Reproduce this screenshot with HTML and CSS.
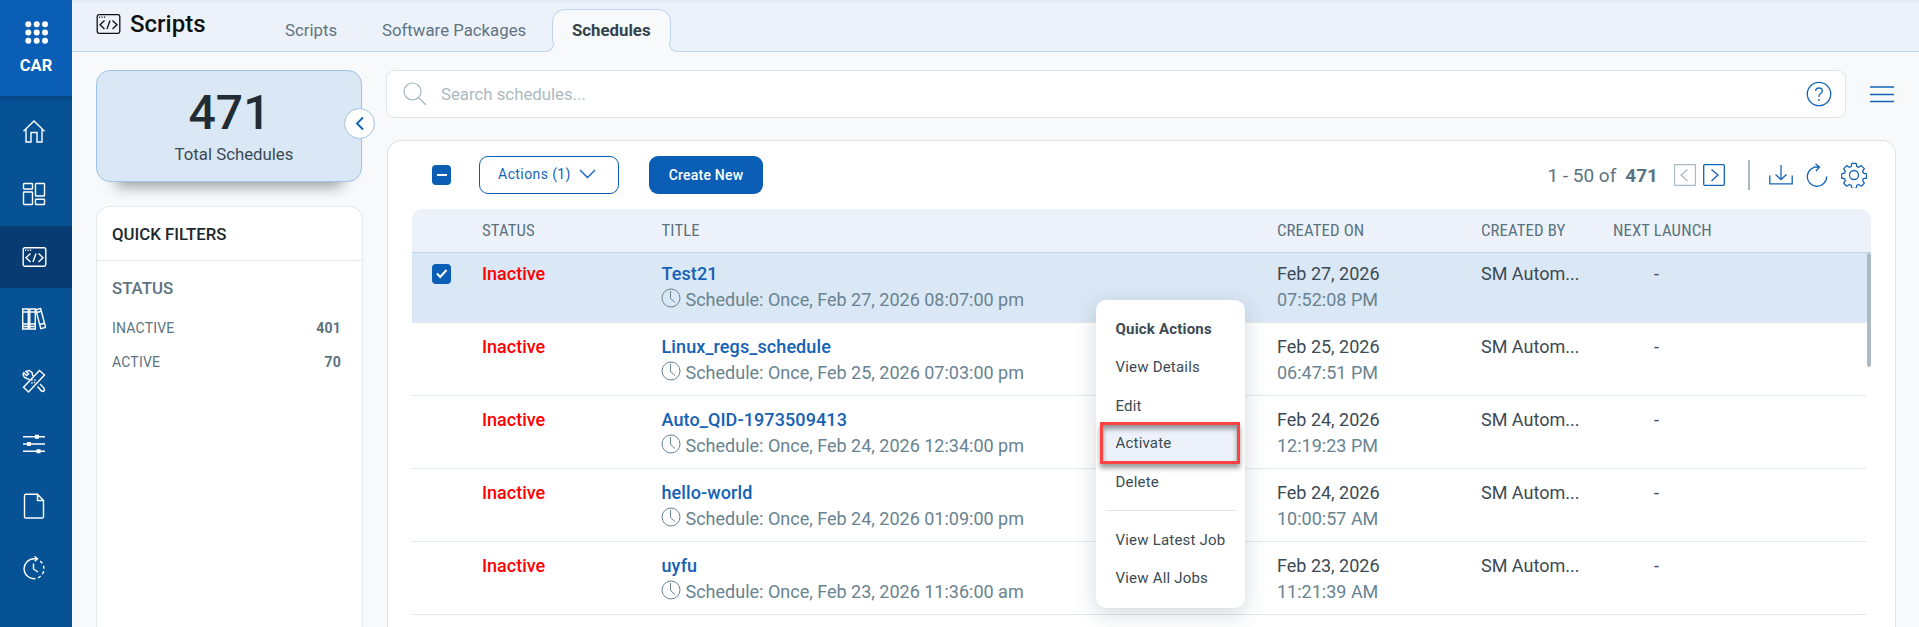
FILE: index.html
```html
<!DOCTYPE html>
<html lang="en">
<head>
    <meta charset="UTF-8">
    <meta name="viewport" content="width=device-width, initial-scale=1.0">
    <title>Scripts - Schedules</title>
    <link rel="stylesheet" href="styles.css">
</head>
<body>
    <!-- Shared icons -->
    <svg class="icon-defs" width="0" height="0">
        <symbol id="icon-clock" viewBox="0 0 20 20">
            <circle cx="10" cy="10" r="9"/>
            <path d="M9.5 3v7.5l4.5 4"/>
        </symbol>
        <symbol id="icon-script" viewBox="0 0 24 20">
            <rect x=".7" y=".7" width="22.6" height="18.6" rx="1.8"/>
            <path d="M8 6.5L3.5 10.7 8 15M16 6.5l4.5 4.2L16 15M13.5 6.5l-3 8.5"/>
            <path d="M2.5 3.2h1.2M5 3.2h1.2M7.5 3.2h1.2"/>
        </symbol>
    </svg>

    <nav class="sidebar">
        <div class="app-switch">
            <svg width="24" height="24" viewBox="0 0 24 24">
                <circle cx="3.3" cy="3.3" r="3"/><circle cx="11.7" cy="3.3" r="3"/><circle cx="20" cy="3.3" r="3"/>
                <circle cx="3.3" cy="11.5" r="3"/><circle cx="11.7" cy="11.5" r="3"/><circle cx="20" cy="11.5" r="3"/>
                <circle cx="3.3" cy="19.7" r="3"/><circle cx="11.7" cy="19.7" r="3"/><circle cx="20" cy="19.7" r="3"/>
            </svg>
            <span>CAR</span>
        </div>
        <div class="nav-item">
            <svg width="24" height="24" viewBox="0 0 24 24"><path d="M1.5 11.3L12 1l10.500 10.300M4 9.500V22h5v-9.500h6V22h5V9.500"/></svg>
        </div>
        <div class="nav-item">
            <svg width="24" height="24" viewBox="0 0 24 24"><rect x="1.500" y="1.500" width="9" height="5.500" rx=".6"/><rect x="1.500" y="10" width="9" height="12.500" rx=".6"/><rect x="13.500" y="1.500" width="9" height="12.500" rx=".6"/><rect x="13.500" y="17.200" width="9" height="5.300" rx=".6"/></svg>
        </div>
        <div class="nav-item active">
            <svg width="25" height="20"><use href="#icon-script"/></svg>
        </div>
        <div class="nav-item">
            <svg width="24" height="24" viewBox="0 0 24 24"><path d="M.7 2h5.600v20H.7zM.7 5h5.600M.7 17h5.600M.7 19.500h5.600M7.800 2h5.500v20H7.800zM7.800 5h5.500M7.800 17h5.500M7.800 19.500h5.500M13.800 2.800l4.800-1.300 5 18.800-4.800 1.400zM14.600 5.500l4.800-1.300M17.800 17.500l4.900-1.300"/></svg>
        </div>
        <div class="nav-item">
            <svg width="24" height="24" viewBox="0 0 24 24"><path d="M17.500 1.500l5 4.500L6.500 23l-5-4.700zM7.500 10.700L2.500 8.500 1 5.500l.8-1.700L4.500 6.500 6.500 5 4 2.300 7 1.500l3 2 .8 3.500M15.500 17.500l4 4.500 2 .5 1-1.700-.5-1.800-4-4M9.500 10.500l1 1M12 13l1 1M12.500 10.500l1 1M9.500 13.500l1 1"/></svg>
        </div>
        <div class="nav-item">
            <svg width="24" height="24" viewBox="0 0 24 24"><path d="M1 4.700h22M1 12h22M1 19.300h22"/><path class="knobs" d="M13 2.700h4v4h-4zM5 10h4v4H5zM14.500 17.300h4v4h-4z"/></svg>
        </div>
        <div class="nav-item">
            <svg width="24" height="26" viewBox="0 0 24 26"><path d="M15.500 1.200H4Q2.500 1.200 2.500 2.700v21Q2.500 25 4 25h16q1.500 0 1.500-1.300V7.500zv6.300h6"/></svg>
        </div>
        <div class="nav-item">
            <svg width="24" height="24" viewBox="0 0 24 24"><path d="M14.500 2.700H12A10 10 0 1 0 13.500 22.600M11.500 7.500v5.500l4.500 3M12.500.3l3 2.400-2.700 2.600"/><path d="M16 21.900a10 10 0 0 0 2.700-1.800M20.300 18.200a10 10 0 0 0 1.400-3M22 12.800a10 10 0 0 0-.5-3M20.300 7.400a10 10 0 0 0-2.100-2.300"/></svg>
        </div>
    </nav>

    <div class="page">
        <header class="topbar">
            <h1><svg width="25" height="20"><use href="#icon-script"/></svg><span>Scripts</span></h1>
            <div class="tabs">
                <a class="tab tab-scripts">Scripts</a>
                <a class="tab tab-packages">Software Packages</a>
                <a class="tab selected">Schedules</a>
            </div>
        </header>

        <div class="content">
            <aside class="filters">
                <div class="total-card">
                    <div class="total-number">471</div>
                    <div class="total-label">Total Schedules</div>
                    <button class="collapse"><svg width="10" height="15" viewBox="0 0 10 15"><path d="M8 1.500L2 7.500l6 6"/></svg></button>
                </div>
                <div class="filter-card">
                    <h2>QUICK FILTERS</h2>
                    <h3>STATUS</h3>
                    <div class="filter-row"><span>INACTIVE</span><b>401</b></div>
                    <div class="filter-row"><span>ACTIVE</span><b>70</b></div>
                </div>
            </aside>

            <main class="main">
                <div class="search-row">
                    <div class="search">
                        <svg class="search-icon" width="24" height="24" viewBox="0 0 24 24"><circle cx="9.500" cy="9.500" r="8.500"/><path d="M15.500 15.500l7.500 7.500"/></svg>
                        <span class="placeholder">Search schedules...</span>
                        <svg class="help-icon" width="26" height="26" viewBox="0 0 26 26"><circle cx="13" cy="13" r="11.700"/><path d="M9.700 10Q9.700 7 13 7t3.300 3q0 1.400-1.700 2.500T13 15.300v.7"/><path class="dot" d="M13 18v2"/></svg>
                    </div>
                    <svg class="menu-icon" width="24" height="17" viewBox="0 0 24 17"><path d="M0 1h24M0 8.500h24M0 15.500h24"/></svg>
                </div>

                <section class="panel">
                    <div class="toolbar">
                        <span class="check"><svg width="19" height="20" viewBox="0 0 19 20"><path d="M5 10h10"/></svg></span>
                        <button class="btn btn-outline">Actions (1)<svg width="17" height="10" viewBox="0 0 17 10"><path d="M1 1l7.500 7.500L16 1"/></svg></button>
                        <button class="btn btn-primary">Create New</button>
                        <div class="pager">
                            <span class="range">1 - 50 of</span>
                            <b>471</b>
                            <svg class="page-btn off" width="22" height="22" viewBox="0 0 22 22"><rect x=".5" y=".5" width="21" height="21" rx="1"/><path d="M13.500 5.500L7 11l6.500 6"/></svg>
                            <svg class="page-btn" width="22" height="22" viewBox="0 0 22 22"><rect x=".7" y=".7" width="20.600" height="20.600" rx="1"/><path d="M8.500 5.500L15 11l-6.500 6"/></svg>
                            <span class="divider"></span>
                            <svg class="tool download" width="24" height="20" viewBox="0 0 24 20"><path d="M.8 10.500v8.300h22.400v-8.300M12 0v14.500M6.500 9.500l5.500 5 5.500-5"/></svg>
                            <svg class="tool refresh" width="22" height="24" viewBox="0 0 22 24"><path d="M12.500 4A9.700 9.700 0 1 0 20.700 13.500M8.500 4h5M9.500.7l4 3.300-3.500 4"/></svg>
                            <svg class="tool gear" width="26" height="26" viewBox="0 0 26 26"><circle cx="13" cy="13" r="4.500"/><path d="M10.900 1.400h4.200l.7 3.100 1.800.8 2.700-1.700 3 3-1.700 2.700.8 1.800 3.100.7v4.200l-3.100.7-.8 1.800 1.700 2.700-3 3-2.700-1.700-1.800.8-.7 3.100h-4.200l-.7-3.100-1.800-.8-2.700 1.700-3-3 1.700-2.700-.8-1.800-3.100-.7v-4.200l3.100-.7.8-1.800-1.700-2.700 3-3 2.700 1.700 1.800-.8z" stroke-linejoin="round"/></svg>
                        </div>
                    </div>

                    <div class="table">
                        <div class="grid table-head">
                            <span></span><span>STATUS</span><span>TITLE</span><span>CREATED ON</span><span>CREATED BY</span><span>NEXT LAUNCH</span>
                        </div>
                        <div class="table-body">
                            <div class="grid row checked">
                                <span class="check"><svg width="19" height="20" viewBox="0 0 19 20"><path d="M5 9.500l3.200 3.500L14.500 6"/></svg></span>
                                <span class="status">Inactive</span>
                                <div><a>Test21</a><p><svg width="20" height="20"><use href="#icon-clock"/></svg>Schedule: Once, Feb 27, 2026 08:07:00 pm</p></div>
                                <div>Feb 27, 2026<p>07:52:08 PM</p></div>
                                <span>SM Autom...</span>
                                <span class="dash">-</span>
                            </div>
                            <div class="grid row">
                                <span></span>
                                <span class="status">Inactive</span>
                                <div><a>Linux_regs_schedule</a><p><svg width="20" height="20"><use href="#icon-clock"/></svg>Schedule: Once, Feb 25, 2026 07:03:00 pm</p></div>
                                <div>Feb 25, 2026<p>06:47:51 PM</p></div>
                                <span>SM Autom...</span>
                                <span class="dash">-</span>
                            </div>
                            <div class="grid row">
                                <span></span>
                                <span class="status">Inactive</span>
                                <div><a>Auto_QID-1973509413</a><p><svg width="20" height="20"><use href="#icon-clock"/></svg>Schedule: Once, Feb 24, 2026 12:34:00 pm</p></div>
                                <div>Feb 24, 2026<p>12:19:23 PM</p></div>
                                <span>SM Autom...</span>
                                <span class="dash">-</span>
                            </div>
                            <div class="grid row">
                                <span></span>
                                <span class="status">Inactive</span>
                                <div><a>hello-world</a><p><svg width="20" height="20"><use href="#icon-clock"/></svg>Schedule: Once, Feb 24, 2026 01:09:00 pm</p></div>
                                <div>Feb 24, 2026<p>10:00:57 AM</p></div>
                                <span>SM Autom...</span>
                                <span class="dash">-</span>
                            </div>
                            <div class="grid row">
                                <span></span>
                                <span class="status">Inactive</span>
                                <div><a>uyfu</a><p><svg width="20" height="20"><use href="#icon-clock"/></svg>Schedule: Once, Feb 23, 2026 11:36:00 am</p></div>
                                <div>Feb 23, 2026<p>11:21:39 AM</p></div>
                                <span>SM Autom...</span>
                                <span class="dash">-</span>
                            </div>
                            <div class="scrollbar"></div>
                        </div>
                    </div>
                </section>
            </main>
        </div>
    </div>

    <!-- Row context menu -->
    <div class="quick-menu">
        <strong>Quick Actions</strong>
        <a>View Details</a>
        <a>Edit</a>
        <a class="highlight">Activate</a>
        <a>Delete</a>
        <hr>
        <a>View Latest Job</a>
        <a>View All Jobs</a>
    </div>
</body>
</html>
```
FILE: styles.css
```css
* {
    box-sizing: border-box;
}
body {
    margin: 0;
    height: 627px;
    overflow: hidden;
    display: flex;
    position: relative;
    font-family: Roboto, "Liberation Sans", sans-serif;
    font-size: 18px;
    color: #3b4a54;
    background: #f7f9fb;
}
h1, h2, h3, p {
    margin: 0;
    font-weight: 500;
}
svg {
    fill: none;
    stroke: currentColor;
    flex: none;
    display: block;
}
button {
    font-family: inherit;
}
.icon-defs {
    position: absolute;
}

/* sidebar */
.sidebar {
    width: 72px;
    flex: none;
    overflow: hidden;
    background: #075195;
    color: #fff;
}
.app-switch {
    height: 96px;
    margin-bottom: 5px;
    padding: 21px 0 0 2px;
    background: #0a5eb5;
    box-shadow: 0 2px 6px rgba(0, 30, 70, 0.3);
    display: flex;
    flex-direction: column;
    align-items: center;
    font-size: 16.5px;
    font-weight: 700;
}
.app-switch svg {
    fill: #fff;
    stroke: none;
}
.app-switch span {
    margin: 11px 2px 0 0;
}
.nav-item {
    height: 62.3px;
    padding-right: 4px;
    display: flex;
    align-items: center;
    justify-content: center;
}
.nav-item svg {
    stroke-width: 1.4;
}
.nav-item.active {
    background: #083b72;
}
.knobs {
    fill: #fff;
    stroke: none;
}

/* top bar */
.page {
    flex: 1;
    min-width: 0;
}
.topbar {
    height: 52px;
    padding-left: 24px;
    border-bottom: 1px solid #bdd5ee;
    background: linear-gradient(#dfeaf5, #edf2fa 4px);
    display: flex;
}
.topbar h1 {
    display: flex;
    width: 165px;
    padding-top: 10px;
    font-size: 24px;
    line-height: 28px;
    color: #111;
}
.topbar h1 svg {
    margin: 4px 9px 0 0;
    stroke-width: 1.3;
}
.tabs {
    display: flex;
    padding-top: 9px;
}
.tab {
    height: 43px;
    padding: 0 24px;
    font-size: 16.8px;
    line-height: 42px;
    color: #5f7482;
    white-space: nowrap;
}
.tab-scripts {
    width: 97px;
}
.tab-packages {
    width: 194px;
}
.tab.selected {
    width: 119px;
    padding: 0 19px;
    line-height: 40px;
    position: relative;
    font-weight: 700;
    color: #33434e;
    background: #f7f9fb;
    border: 1px solid #bdd5ee;
    border-bottom: 0;
    border-radius: 13px 13px 0 0;
}
.tab.selected::before,
.tab.selected::after {
    content: "";
    position: absolute;
    bottom: 0;
    width: 9px;
    height: 9px;
    background: #edf2fa;
    border-bottom: 1px solid #bdd5ee;
}
.tab.selected::before {
    left: -9px;
    border-right: 1px solid #bdd5ee;
    border-bottom-right-radius: 8px;
    box-shadow: 3px 3px 0 #f7f9fb;
    clip-path: inset(0);
}
.tab.selected::after {
    right: -9px;
    border-left: 1px solid #bdd5ee;
    border-bottom-left-radius: 8px;
    box-shadow: -3px 3px 0 #f7f9fb;
    clip-path: inset(0);
}

.content {
    display: flex;
    padding: 18px 23px 0 24px;
    height: 575px;
}

/* left column */
.filters {
    width: 267px;
    margin-right: 23px;
    display: flex;
    flex-direction: column;
}
.total-card {
    position: relative;
    width: 266px;
    height: 112px;
    margin-bottom: 24px;
    padding-top: 14px;
    border: 1px solid #9fc2e5;
    border-radius: 14px;
    background: #dae7f4;
    box-shadow: 0 24px 14px -20px rgba(0, 0, 0, 0.4);
    text-align: center;
}
.total-number {
    padding-left: 1px;
    font-size: 48px;
    line-height: 56px;
    font-weight: 500;
    color: #222c33;
}
.total-label {
    padding: 3px 0 0 10px;
    font-size: 16.8px;
    line-height: 20px;
}
.collapse {
    position: absolute;
    top: 37px;
    right: -14px;
    width: 31px;
    height: 31px;
    padding: 0 0 0 10px;
    border: 1px solid #9fc2e5;
    border-radius: 50%;
    background: #fff;
    color: #0a5eb5;
}
.collapse svg {
    stroke-width: 1.8;
}
.filter-card {
    flex: 1;
    border: 1px solid #e3e9ec;
    border-bottom: 0;
    border-radius: 14px 14px 0 0;
    background: #fff;
}
.filter-card h2 {
    height: 54px;
    padding-left: 15px;
    border-bottom: 1px solid #e1e8eb;
    font-size: 16.8px;
    line-height: 54px;
    color: #1d272e;
}
.filter-card h3 {
    padding: 16px 15px 0;
    font-size: 16.8px;
    line-height: 22px;
    color: #5b7380;
}
.filter-row {
    display: flex;
    justify-content: space-between;
    padding: 0 21px 0 15px;
    font-size: 14px;
    letter-spacing: 0.2px;
    line-height: 34px;
    color: #5b7380;
}
.filter-row:nth-of-type(1) {
    margin-top: 12px;
}

/* search */
.main {
    flex: 1;
    min-width: 0;
    display: flex;
    flex-direction: column;
}
.search-row {
    display: flex;
    align-items: center;
    margin-bottom: 22px;
}
.search {
    width: 1460px;
    height: 48px;
    padding: 0 13px 0 16px;
    border: 1px solid #dde4e8;
    border-radius: 9px;
    background: #fff;
    display: flex;
    align-items: center;
}
.search-icon {
    color: #a3b5be;
    stroke-width: 1.2;
}
.placeholder {
    flex: 1;
    margin-left: 14px;
    font-size: 16.8px;
    color: #abbac2;
}
.help-icon, .menu-icon, .tool, .page-btn {
    color: #1464b8;
    stroke-width: 1.3;
}
.menu-icon {
    margin-left: 24px;
    stroke-width: 1.5;
}

/* panel */
.panel {
    flex: 1;
    margin-left: 1px;
    padding: 15px 24px 0 24px;
    border: 1px solid #dde4e8;
    border-bottom: 0;
    border-radius: 14px 14px 0 0;
    background: #fff;
    overflow: hidden;
}
.toolbar {
    display: flex;
    align-items: center;
    height: 38px;
    margin-bottom: 15px;
    padding-left: 20px;
}
.check {
    width: 19px;
    height: 20px;
    border-radius: 4px;
    background: #0a5eb5;
    color: #fff;
}
.check svg {
    stroke-width: 2;
}
.btn {
    height: 38px;
    border-radius: 9px;
    font-size: 14px;
    letter-spacing: 0.4px;
    display: flex;
    align-items: center;
    justify-content: center;
}
.btn-outline {
    width: 140px;
    margin: 0 30px 0 28px;
    padding: 0 4px 2px 0;
    border: 1px solid #0a5eb5;
    background: #fff;
    color: #1464b8;
}
.btn-outline svg {
    margin-left: 8px;
    stroke-width: 1.4;
}
.btn-primary {
    width: 114px;
    padding: 0;
    border: 0;
    background: #0a5eb5;
    color: #fff;
    font-weight: 500;
    letter-spacing: 0.2px;
}
.pager {
    margin-left: auto;
    padding-right: 4px;
    display: flex;
    align-items: center;
    font-size: 19px;
    color: #5b7380;
}
.pager b {
    margin: 0 16px 0 9px;
}
.page-btn.off {
    margin-right: 7px;
    color: #a9bac2;
}
.divider {
    width: 2px;
    height: 30px;
    margin: 0 19px 0 23px;
    background: #abbac5;
}
.refresh {
    margin: 0 13px;
}

/* table */
.grid {
    display: grid;
    grid-template-columns: 70px 179.5px 615.5px 204px 132px 1fr;
}
.table-head {
    height: 44px;
    border-bottom: 1px solid #bdd5ee;
    border-radius: 10px 10px 0 0;
    background: #edf2fa;
    font-family: "Roboto Condensed", Roboto, sans-serif;
    font-stretch: condensed;
    font-size: 16.8px;
    letter-spacing: 0.1px;
    line-height: 43px;
    color: #5b7380;
}
.table-body {
    position: relative;
}
.row {
    height: 73px;
    margin-right: 4px;
    padding-top: 11px;
    border-bottom: 1px solid #e3e9ec;
    line-height: 26px;
}
.row.checked {
    height: 70px;
    padding-top: 8px;
    background: #dae7f4;
}
.row .check {
    margin: 3px 0 0 20px;
}
.status {
    font-weight: 500;
    color: #f00;
}
.row a {
    font-weight: 500;
    letter-spacing: 0.1px;
    color: #1561b5;
}
.row p {
    display: flex;
    font-weight: 400;
    color: #698391;
}
.row p svg {
    margin: 1px 5px 0 -1px;
}
.dash {
    padding-left: 41px;
}
.scrollbar {
    position: absolute;
    top: 0;
    right: 0;
    width: 4px;
    height: 114px;
    border-radius: 2px;
    background: #abbac5;
}

/* context menu */
.quick-menu {
    position: absolute;
    left: 1096px;
    top: 300px;
    width: 149px;
    height: 308px;
    padding: 10px 4px;
    border-radius: 10px;
    background: #fff;
    box-shadow: 0 6px 22px rgba(40, 60, 80, 0.2);
    display: flex;
    flex-direction: column;
    font-size: 15px;
    letter-spacing: 0.2px;
    line-height: 38px;
}
.quick-menu strong,
.quick-menu a {
    flex: none;
    height: 38.3px;
    padding-left: 15.5px;
}
.quick-menu a.highlight {
    height: 42px;
    margin: -3px 1px -1px 0;
    padding-left: 12.5px;
    border: 3px solid #fb4343;
    line-height: 37px;
    background: #edf2fa;
    box-shadow: 0 4px 5px rgba(0, 0, 0, 0.4), inset 0 4px 5px rgba(0, 0, 0, 0.4);
}
.quick-menu hr {
    width: 130px;
    margin: 9px 0 10px 6px;
    border: 0;
    border-top: 1px solid #dde4e8;
}
```
